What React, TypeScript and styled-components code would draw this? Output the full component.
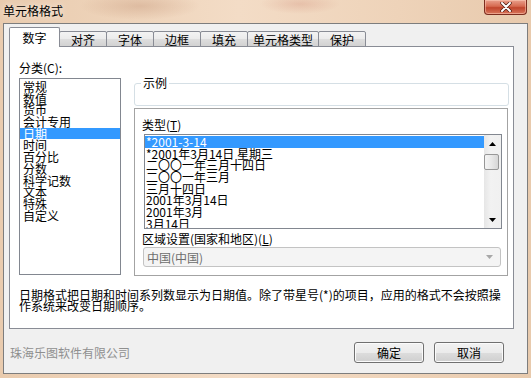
import styled, { createGlobalStyle } from 'styled-components';

const GlobalStyle = createGlobalStyle`
    html, body {
        margin: 0;
        padding: 0;
    }
    body {
        font-family: "Noto Sans CJK SC", "Liberation Sans", sans-serif;
        font-size: 12px;
        color: #000;
    }
`;

const Window = styled.div`
    box-sizing: border-box;
    width: 531px;
    height: 378px;
    padding: 0 3px 4px 3px;
    display: flex;
    flex-direction: column;
    background:
        radial-gradient(ellipse 60px 14px at 140px 6px, rgba(190, 140, 110, 0.35), transparent),
        radial-gradient(ellipse 40px 10px at 300px 4px, rgba(200, 120, 100, 0.25), transparent),
        linear-gradient(90deg, #e9cbae 0%, #f3dcc6 45%, #eed3b9 75%, #e8caad 100%);
`;

const TitleBar = styled.div`
    height: 23px;
    display: flex;
    justify-content: space-between;
    align-items: flex-start;
`;

const TitleText = styled.span`
    line-height: 22px;
    font-size: 12px;
    text-shadow: 0 0 6px rgba(255, 255, 255, 0.9);
`;

const CloseButton = styled.div`
    box-sizing: border-box;
    width: 43px;
    height: 15px;
    margin-right: 1px;
    display: flex;
    align-items: center;
    justify-content: center;
    border: 1px solid #7b2c1e;
    border-top: none;
    border-radius: 0 0 4px 4px;
    background: linear-gradient(#e9a08c 0%, #d66a50 45%, #c0452c 55%, #d8765c 100%);
    box-shadow: inset 0 0 0 1px rgba(255, 210, 190, 0.5);
`;

const Client = styled.div`
    box-sizing: border-box;
    height: 351px;
    padding: 3px 0 0 5px;
    border: 1px solid #7d7d7d;
    background: #f0f0f0;
`;

const TabRow = styled.div`
    position: relative;
    z-index: 1;
    height: 20px;
    display: flex;
    align-items: flex-end;
`;

const Tab = styled.div<{ $active?: boolean }>`
    box-sizing: border-box;
    min-width: ${p => (p.$active ? 51 : 48)}px;
    height: ${p => (p.$active ? 20 : 16)}px;
    padding: 0 5px;
    margin-right: -1px;
    text-align: center;
    line-height: ${p => (p.$active ? 19 : 15)}px;
    border: 1px solid #898c95;
    border-bottom: ${p => (p.$active ? 'none' : '1px solid #898c95')};
    border-radius: 2px 2px 0 0;
    background: ${p => (p.$active
        ? '#ffffff'
        : 'linear-gradient(#f3f3f3 0%, #ebebeb 50%, #dedede 50%, #d2d2d2 100%)')};
    position: relative;
    z-index: ${p => (p.$active ? 2 : 1)};
`;

const Panel = styled.div`
    box-sizing: border-box;
    width: 505px;
    height: 283px;
    margin-top: -1px;
    padding: 15px 0 0 9px;
    border: 1px solid #898c95;
    background: #ffffff;
`;

const PanelBody = styled.div`
    display: flex;
    align-items: flex-start;
`;

const LeftCol = styled.div`
    width: 102px;
    display: flex;
    flex-direction: column;
`;

const FieldLabel = styled.div<{ $gap?: number }>`
    line-height: 12px;
    height: 12px;
    margin-top: ${p => p.$gap ?? 0}px;
    white-space: nowrap;
    u {
        text-decoration: underline;
    }
`;

const ListBox = styled.div<{ $height: number; $gap?: number; $width?: number }>`
    box-sizing: border-box;
    height: ${p => p.$height}px;
    width: ${p => (p.$width ? `${p.$width}px` : 'auto')};
    margin-top: ${p => p.$gap ?? 0}px;
    border: 1px solid #828790;
    background: #ffffff;
    display: flex;
    overflow: hidden;
`;

const ItemColumn = styled.div<{ $padTop: number; $padLeft: number }>`
    flex: 1;
    min-width: 0;
    padding-top: ${p => p.$padTop}px;
    overflow: hidden;
    > div {
        padding-left: ${p => p.$padLeft}px;
    }
`;

const ListItem = styled.div<{ $selected?: boolean }>`
    height: 11.7px;
    line-height: 11.7px;
    white-space: nowrap;
    background: ${p => (p.$selected ? '#3399ff' : 'transparent')};
    color: ${p => (p.$selected ? '#ffffff' : '#000000')};
`;

const ScrollBar = styled.div`
    width: 17px;
    display: flex;
    flex-direction: column;
    background: linear-gradient(90deg, #e6e6e6 0%, #f2f2f2 40%, #f0f0f0 100%);
`;

const ScrollArrow = styled.div`
    height: 17px;
    display: flex;
    align-items: center;
    justify-content: center;
`;

const ScrollTrack = styled.div`
    flex: 1;
    padding: 2px 1px 0 0;
`;

const Thumb = styled.div`
    box-sizing: border-box;
    width: 15px;
    height: 16px;
    margin-left: 0;
    border: 1px solid #979797;
    border-radius: 2px;
    background: linear-gradient(90deg, #f4f4f4 0%, #e8e8e8 50%, #d6d6d6 100%);
`;

const RightCol = styled.div`
    width: 375px;
    margin-left: 13px;
    display: flex;
    flex-direction: column;
`;

const SampleBox = styled.fieldset`
    margin: 15px 0 0 0;
    padding: 0;
    border: 1px solid #d5dfe5;
    border-radius: 3px;
    min-width: 0;
    > legend {
        margin-left: 6px;
        padding: 0 2px;
        line-height: 12px;
        height: 12px;
    }
`;

const SampleArea = styled.div`
    height: 16px;
`;

const TypeBox = styled.div`
    box-sizing: border-box;
    width: 374px;
    height: 168px;
    margin-top: 2px;
    padding: 10px 0 0 7px;
    border: 1px solid #a3a3a3;
    display: flex;
    flex-direction: column;
`;

const Select = styled.div`
    box-sizing: border-box;
    width: 358px;
    height: 20px;
    margin: 2px 0 0 1px;
    padding: 0 7px 0 3px;
    display: flex;
    align-items: center;
    justify-content: space-between;
    border: 1px solid #c3c3c3;
    border-radius: 3px;
    background: #f4f4f4;
    color: #6d6d6d;
`;

const Description = styled.div`
    width: 486px;
    margin-top: 13px;
    line-height: 11px;
`;

const Footer = styled.div`
    box-sizing: border-box;
    width: 505px;
    padding: 13px 10px 0 1px;
    display: flex;
    align-items: center;
    gap: 10px;
`;

const Company = styled.span`
    flex: 1;
    color: #8f8f8f;
    line-height: 14px;
`;

const Button = styled.button`
    box-sizing: border-box;
    width: 70px;
    height: 21px;
    padding: 0;
    border: 1px solid #707070;
    border-radius: 3px;
    font-family: inherit;
    font-size: 12px;
    color: #000;
    background: linear-gradient(#f2f2f2 0%, #ebebeb 50%, #dddddd 50%, #cfcfcf 100%);
    box-shadow: inset 0 0 0 1px #fbfbfb;
`;

const Triangle = ({ down, color = '#000' }: { down?: boolean; color?: string }) => (
    <svg width="7" height="4" viewBox="0 0 7 4">
        <polygon points={down ? '0,0 7,0 3.5,4' : '3.5,0 7,4 0,4'} fill={color} />
    </svg>
);

const categories = ['常规', '数值', '货币', '会计专用', '日期', '时间', '百分比', '分数', '科学记数', '文本', '特殊', '自定义'];

const types = [
    '*2001-3-14',
    '*2001年3月14日 星期三',
    '二〇〇一年三月十四日',
    '二〇〇一年三月',
    '三月十四日',
    '2001年3月14日',
    '2001年3月',
    '3月14日',
];

const tabs = ['数字', '对齐', '字体', '边框', '填充', '单元格类型', '保护'];

export default function App() {
    return (
        <Window>
            <GlobalStyle />
            <TitleBar>
                <TitleText>单元格格式</TitleText>
                <CloseButton>
                    <svg width="12" height="10" viewBox="0 0 12 10">
                        <path d="M2 1 L10 9 M10 1 L2 9" stroke="#4a1a10" strokeWidth="3.4" strokeLinecap="round" />
                        <path d="M2 1 L10 9 M10 1 L2 9" stroke="#ffffff" strokeWidth="2" strokeLinecap="round" />
                    </svg>
                </CloseButton>
            </TitleBar>
            <Client>
                <TabRow>
                    {tabs.map((t, i) => (
                        <Tab key={t} $active={i === 0}>{t}</Tab>
                    ))}
                </TabRow>
                <Panel>
                    <PanelBody>
                        <LeftCol>
                            <FieldLabel>分类(C):</FieldLabel>
                            <ListBox $height={197} $gap={4}>
                                <ItemColumn $padTop={2} $padLeft={3}>
                                    {categories.map(c => (
                                        <ListItem key={c} $selected={c === '日期'}>{c}</ListItem>
                                    ))}
                                </ItemColumn>
                            </ListBox>
                        </LeftCol>
                        <RightCol>
                            <SampleBox>
                                <legend>示例</legend>
                                <SampleArea />
                            </SampleBox>
                            <TypeBox>
                                <FieldLabel>类型(<u>T</u>)</FieldLabel>
                                <ListBox $height={95} $gap={3} $width={358} style={{ marginLeft: 2 }}>
                                    <ItemColumn $padTop={1} $padLeft={1}>
                                        {types.map((t, i) => (
                                            <ListItem key={t} $selected={i === 0}>{t}</ListItem>
                                        ))}
                                    </ItemColumn>
                                    <ScrollBar>
                                        <ScrollArrow><Triangle /></ScrollArrow>
                                        <ScrollTrack><Thumb /></ScrollTrack>
                                        <ScrollArrow><Triangle down /></ScrollArrow>
                                    </ScrollBar>
                                </ListBox>
                                <FieldLabel $gap={4}>区域设置(国家和地区)(<u>L</u>)</FieldLabel>
                                <Select>
                                    <span>中国(中国)</span>
                                    <Triangle down color="#a8a8a8" />
                                </Select>
                            </TypeBox>
                        </RightCol>
                    </PanelBody>
                    <Description>
                        日期格式把日期和时间系列数显示为日期值。除了带星号(*)的项目，应用的格式不会按照操作系统来改变日期顺序。
                    </Description>
                </Panel>
                <Footer>
                    <Company>珠海乐图软件有限公司</Company>
                    <Button>确定</Button>
                    <Button>取消</Button>
                </Footer>
            </Client>
        </Window>
    );
}
